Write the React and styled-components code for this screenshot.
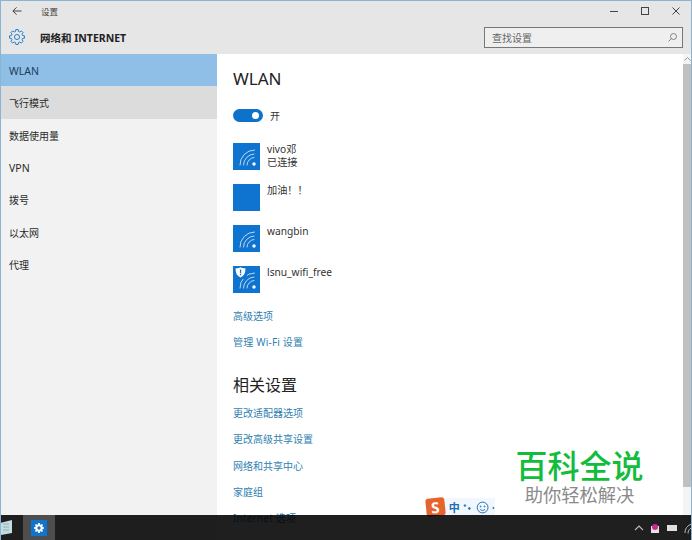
import React from "react";
import styled, { createGlobalStyle } from "styled-components";

const Global = createGlobalStyle`
  html, body { margin: 0; padding: 0; background: #fff; }
  #root { width: 692px; height: 540px; }
  * { box-sizing: border-box; }
`;

const FONT = `"Noto Sans", "Noto Sans CJK SC", sans-serif`;

const Screen = styled.div`
  position: relative;
  width: 692px;
  height: 540px;
  overflow: hidden;
  display: flex;
  flex-direction: column;
  font-family: ${FONT};
  color: #222;
  border-top: 1px solid #8ab4d4;
  border-left: 1px solid #8ab4d4;
  border-right: 1px solid #8ab4d4;
`;

const Chrome = styled.header`
  height: 53px;
  flex: none;
  background: #e6e6e6;
  display: flex;
  flex-direction: column;
`;

const TitleBar = styled.div`
  height: 19px;
  display: flex;
  align-items: center;
  padding-left: 11px;
`;

const BackIcon = styled.svg`
  width: 10px;
  height: 10px;
  margin-right: 19px;
`;

const TitleText = styled.span`
  font-size: 8.5px;
  color: #444;
  flex: 1;
`;

const WinButton = styled.svg`
  width: 10px;
  height: 10px;
  margin-right: ${(p) => p.$gap}px;
`;

const HeaderRow = styled.div`
  flex: 1;
  display: flex;
  align-items: center;
  padding: 0 8px 0 8px;
`;

const GearWrap = styled.div`
  width: 16px;
  height: 16px;
  margin-right: 15px;
  color: #1978c8;
  display: flex;
`;

const SectionTitle = styled.h1`
  flex: 1;
  margin: 0;
  font-size: 10.5px;
  font-weight: 700;
  color: #222;
`;

const SearchBox = styled.div`
  width: 199px;
  height: 21px;
  border: 1px solid #777;
  background: #efefef;
  display: flex;
  align-items: center;
  justify-content: space-between;
  padding: 0 4px 0 7px;
  font-size: 10px;
  color: #666;
`;

const Body = styled.div`
  flex: 1;
  min-height: 0;
  display: flex;
`;

const Sidebar = styled.nav`
  width: 216px;
  flex: none;
  background: #f2f2f2;
`;

const NavItem = styled.div`
  height: 32.3px;
  display: flex;
  align-items: center;
  padding: 1px 0 0 8px;
  font-size: ${(p) => (p.$latin ? "10.5px" : "10px")};
  color: ${(p) => (p.$active ? "#1a3d5c" : "#2a2a2a")};
  background: ${(p) => (p.$active ? "#8fbfe6" : p.$hover ? "#dcdcdc" : "transparent")};
`;

const Content = styled.main`
  position: relative;
  flex: 1;
  background: #fff;
  padding: 13px 0 0 16px;
`;

const Heading = styled.h2`
  margin: 0;
  height: 24px;
  line-height: 24px;
  font-size: 17px;
  font-weight: 400;
  color: #222;
`;

const ToggleRow = styled.div`
  margin-top: 17px;
  height: 14px;
  display: flex;
  align-items: center;
  gap: 7px;
  font-size: 10px;
  color: #333;
`;

const Toggle = styled.div`
  width: 30px;
  height: 13px;
  border-radius: 7px;
  background: #0f72c9;
  display: flex;
  align-items: center;
  justify-content: flex-end;
  padding-right: 4px;
`;

const Knob = styled.span`
  width: 7px;
  height: 7px;
  border-radius: 50%;
  background: #fff;
`;

const NetworkList = styled.div`
  margin-top: 21px;
  display: flex;
  flex-direction: column;
  gap: 14px;
`;

const Network = styled.div`
  display: flex;
  gap: 7px;
  height: 27px;
`;

const NetworkTile = styled.div`
  width: 27px;
  height: 27px;
  background: #0f74cf;
`;

const NetworkText = styled.div`
  font-size: 10.2px;
  line-height: 13px;
  color: #333;
`;

const LinkGroup = styled.div`
  display: flex;
  flex-direction: column;
  margin-top: ${(p) => p.$top}px;
`;

const LinkItem = styled.a`
  height: 26.4px;
  line-height: 26.4px;
  font-size: 10px;
  letter-spacing: ${(p) => (p.$latin ? "0.2px" : "0")};
  color: #2f7fb0;
`;

const RelatedHeading = styled(Heading)`
  margin-top: 17px;
  font-size: 16px;
`;

const Scrollbar = styled.div`
  position: absolute;
  top: 0;
  right: 0;
  bottom: 0;
  width: 8px;
  background: #f4f4f4;
  display: flex;
  flex-direction: column;
  align-items: center;
  padding-top: 3px;
`;

const ScrollThumb = styled.div`
  margin-top: 3px;
  width: 8px;
  height: 423px;
  background: #c0c0c0;
`;

const Watermark = styled.div`
  position: absolute;
  left: 497px;
  top: 445px;
  width: 163px;
  height: 70px;
  background: rgba(255, 255, 255, 0.94);
  display: flex;
  flex-direction: column;
  align-items: center;
`;

const WatermarkTitle = styled.div`
  font-family: "Noto Sans CJK SC", sans-serif;
  font-size: 32px;
  line-height: 36px;
  font-weight: 500;
  color: #12bd3c;
`;

const WatermarkSub = styled.div`
  font-family: "Noto Sans CJK SC", sans-serif;
  font-size: 18.3px;
  line-height: 24px;
  color: #8a8a8a;
`;

const ImeBar = styled.div`
  position: absolute;
  left: 425px;
  top: 497px;
  width: 69px;
  height: 18px;
  display: flex;
  align-items: center;
  gap: 3px;
  background: #f1f7fc;
  font-size: 11px;
  font-weight: 700;
  color: #1f6fb5;
`;

const ImeLogo = styled.div`
  width: 19px;
  height: 18px;
  margin-right: 1px;
  background: #e8622c;
  color: #fff;
  font-size: 15px;
  line-height: 18px;
  text-align: center;
  border-radius: 3px;
  transform: rotate(-6deg);
`;

const Taskbar = styled.footer`
  position: absolute;
  left: -1px;
  right: -1px;
  bottom: 0;
  height: 25px;
  background: rgba(0, 0, 0, 0.88);
  display: flex;
  align-items: center;
`;

const StartTile = styled.div`
  width: 23px;
  height: 25px;
  display: flex;
  align-items: center;
`;

const TaskApp = styled.div`
  width: 32px;
  height: 25px;
  background: #4e4e4e;
  display: flex;
  align-items: center;
  justify-content: center;
`;

const TaskAppIcon = styled.div`
  width: 16px;
  height: 16px;
  background: #0f74cf;
  display: flex;
  align-items: center;
  justify-content: center;
  color: #fff;
`;

const Tray = styled.div`
  margin-left: auto;
  margin-right: -4px;
  display: flex;
  align-items: center;
  gap: 6px;
`;

const gearPath = (teeth, ro, ri) => {
  const pts = [];
  const step = (Math.PI * 2) / teeth;
  for (let i = 0; i < teeth; i++) {
    const a = i * step;
    [
      [ri, -0.34],
      [ro, -0.2],
      [ro, 0.2],
      [ri, 0.34],
    ].forEach(([r, f]) => {
      const t = a + f * step;
      pts.push(`${(12 + r * Math.cos(t)).toFixed(2)} ${(12 + r * Math.sin(t)).toFixed(2)}`);
    });
  }
  return `M${pts.join("L")}Z`;
};

const Gear = () => (
  <svg width="16" height="16" viewBox="0 0 24 24" fill="none" stroke="currentColor" strokeWidth="1.4" strokeLinejoin="round">
    <path d={gearPath(8, 11.3, 8.6)} />
    <circle cx="12" cy="12" r="3.8" />
  </svg>
);

const SolidGear = () => (
  <svg width="10" height="10" viewBox="0 0 24 24">
    <path d={`${gearPath(8, 12, 9)}M12 8a4 4 0 1 0 0 8a4 4 0 1 0 0-8Z`} fill="currentColor" fillRule="evenodd" />
  </svg>
);

const WifiIcon = ({ shield, arcs = true }) => (
  <svg width="27" height="27" viewBox="0 0 27 27" fill="none">
    {arcs && (
      <g stroke="#fff" strokeOpacity="0.8" strokeWidth="0.9" strokeLinecap="round">
        <path d="M7 22A14.500 14.500 0 0 1 21.500 7" />
        <path d="M10.500 22A11 11 0 0 1 21 11" />
        <path d="M14 22A7.500 7.500 0 0 1 21 14.500" />
      </g>
    )}
    {arcs && <circle cx="21" cy="21" r="1.700" fill="#fff" />}
    {shield && (
      <g>
        <rect x="1" y="0" width="13" height="13" fill="#0f74cf" />
        <path d="M2.500 2.500C5 2.500 6.500 2 7.500 1.300 8.500 2 10 2.500 12.500 2.500 12.500 7 11 10 7.500 11.500 4 10 2.500 7 2.500 2.500z" fill="#fff" />
        <rect x="6.900" y="3.500" width="1.300" height="3.800" fill="#0f74cf" />
        <rect x="6.900" y="8" width="1.300" height="1.300" fill="#0f74cf" />
      </g>
    )}
  </svg>
);

const networks = [
  { name: "vivo邓", status: "已连接", arcs: true },
  { name: "加油！！", arcs: false },
  { name: "wangbin", arcs: true },
  { name: "lsnu_wifi_free", arcs: true, shield: true },
];

const navItems = [
  { label: "WLAN", latin: true },
  { label: "飞行模式" },
  { label: "数据使用量" },
  { label: "VPN", latin: true },
  { label: "拨号" },
  { label: "以太网" },
  { label: "代理" },
];
const related = ["更改适配器选项", "更改高级共享设置", "网络和共享中心", "家庭组", "Internet 选项"];

export default function App() {
  return (
    <>
      <Global />
      <Screen>
        <Chrome>
          <TitleBar>
            <BackIcon viewBox="0 0 11 11" fill="none" stroke="#333" strokeWidth="1">
              <path d="M1 5.500h9.500M5 1.500l-4 4 4 4" />
            </BackIcon>
            <TitleText>设置</TitleText>
            <WinButton $gap={21} viewBox="0 0 10 10" stroke="#444" fill="none"><path d="M1 5.500h8" /></WinButton>
            <WinButton $gap={21} viewBox="0 0 10 10" stroke="#444" fill="none"><rect x="1.500" y="1.500" width="7" height="7" /></WinButton>
            <WinButton $gap={10} viewBox="0 0 10 10" stroke="#444" fill="none"><path d="M1.500 1.500l7 7M8.500 1.500l-7 7" /></WinButton>
          </TitleBar>
          <HeaderRow>
            <GearWrap><Gear /></GearWrap>
            <SectionTitle>网络和 INTERNET</SectionTitle>
            <SearchBox>
              <span>查找设置</span>
              <svg width="11" height="11" viewBox="0 0 11 11" fill="none" stroke="#777" strokeWidth="0.9">
                <circle cx="6.500" cy="4.500" r="3" />
                <path d="M4.300 6.700L1.500 9.500" />
              </svg>
            </SearchBox>
          </HeaderRow>
        </Chrome>
        <Body>
          <Sidebar>
            {navItems.map((n, i) => (
              <NavItem key={n.label} $latin={n.latin} $active={i === 0} $hover={i === 1}>{n.label}</NavItem>
            ))}
          </Sidebar>
          <Content>
            <Heading>WLAN</Heading>
            <ToggleRow>
              <Toggle><Knob /></Toggle>
              <span>开</span>
            </ToggleRow>
            <NetworkList>
              {networks.map((n) => (
                <Network key={n.name}>
                  <NetworkTile><WifiIcon arcs={n.arcs} shield={n.shield} /></NetworkTile>
                  <NetworkText>
                    <div>{n.name}</div>
                    {n.status && <div>{n.status}</div>}
                  </NetworkText>
                </Network>
              ))}
            </NetworkList>
            <LinkGroup $top={10}>
              <LinkItem>高级选项</LinkItem>
              <LinkItem $latin>管理 Wi-Fi 设置</LinkItem>
            </LinkGroup>
            <RelatedHeading>相关设置</RelatedHeading>
            <LinkGroup $top={3}>
              {related.map((r) => <LinkItem key={r} $latin={r.startsWith("Internet")}>{r}</LinkItem>)}
            </LinkGroup>
            <Scrollbar>
              <svg width="7" height="4" viewBox="0 0 7 4" fill="none" stroke="#999"><path d="M.5 3.500l3-3 3 3" /></svg>
              <ScrollThumb />
            </Scrollbar>
          </Content>
        </Body>
        <Watermark>
          <WatermarkTitle>百科全说</WatermarkTitle>
          <WatermarkSub>助你轻松解决</WatermarkSub>
        </Watermark>
        <ImeBar>
          <ImeLogo>S</ImeLogo>
          <span>中</span>
          <svg width="33" height="13" viewBox="0 0 33 13" fill="none" stroke="#1f6fb5">
            <circle cx="2" cy="4.500" r="0.800" fill="#1f6fb5" />
            <circle cx="6.500" cy="7.500" r="0.900" fill="#1f6fb5" />
            <circle cx="20" cy="6.500" r="5.500" />
            <circle cx="18" cy="5.500" r="0.500" />
            <circle cx="22" cy="5.500" r="0.500" />
            <path d="M17.500 8.500c1.500 1.300 3.500 1.300 5 0" />
            <circle cx="31" cy="7" r="0.600" fill="#1f6fb5" />
          </svg>
        </ImeBar>
        <Taskbar>
          <StartTile>
            <svg width="13" height="18" viewBox="0 0 13 18">
              <path d="M0 4l12-3v13L1 16z" fill="#c4dde0" />
              <path d="M3 5h6M3 8h6M3 11h6" stroke="#8db2b8" />
            </svg>
          </StartTile>
          <TaskApp>
            <TaskAppIcon><SolidGear /></TaskAppIcon>
          </TaskApp>
          <Tray>
            <svg width="10" height="6" viewBox="0 0 10 6" fill="none" stroke="#bbb" strokeWidth="1.100"><path d="M1 5l4-4 4 4" /></svg>
            <svg width="10" height="12" viewBox="0 0 10 12">
              <rect x="1" y="4" width="8" height="7" fill="#e8e0e6" />
              <circle cx="5" cy="5" r="3" fill="#c0308c" />
            </svg>
            <svg width="12" height="8" viewBox="0 0 12 8">
              <rect x="1" y="1" width="10" height="6" fill="#dfdfdf" />
            </svg>
            <svg width="12" height="12" viewBox="0 0 12 12" fill="none" stroke="#ccc" strokeWidth="0.900">
              <path d="M1 11C1 5 5 2 12 1M4 11.500C4 7.500 7 5 12 4.500M7.500 12C7.500 9.500 9 8.500 12 8" />
            </svg>
          </Tray>
        </Taskbar>
      </Screen>
    </>
  );
}
